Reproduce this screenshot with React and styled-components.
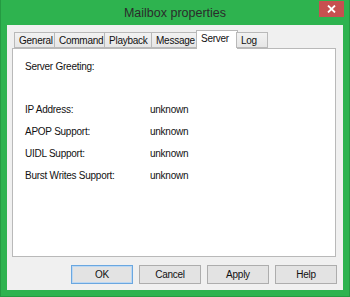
import React from 'react';
import styled, { createGlobalStyle } from 'styled-components';

const Global = createGlobalStyle`
  html, body { margin: 0; padding: 0; }
  body { width: 350px; height: 297px; overflow: hidden; font-family: "Liberation Sans", Arial, sans-serif; }
`;

const Frame = styled.div`
  box-sizing: border-box;
  width: 350px;
  height: 297px;
  background: #2eb34f;
  border: 1px solid #259a42;
  border-top: none;
  display: flex;
  flex-direction: column;
  padding: 0 6px 6px;
`;

const TitleBar = styled.div`
  height: 25px;
  display: grid;
  grid-template-columns: 1fr auto 1fr;
  align-items: start;
  margin: 0 -6px;
`;

const Title = styled.div`
  grid-column: 2;
  font-size: 12.5px;
  color: #2b2b2b;
  padding-top: 6px;
`;

const CloseBtn = styled.div`
  grid-column: 3;
  justify-self: end;
  margin: 1px 5px 0 0;
  width: 25px;
  height: 16px;
  background: #c75050;
  display: flex;
  align-items: center;
  justify-content: center;
`;

const Client = styled.div`
  flex: 1;
  background: #f0f0f0;
  display: flex;
  flex-direction: column;
  padding: 5px 7px 6px 5px;
  font-size: 10px;
  letter-spacing: -0.25px;
  color: #111;
`;

const TabRow = styled.div`
  display: flex;
  align-items: flex-end;
  height: 18px;
  padding-left: 2px;
  position: relative;
  z-index: 1;
`;

const Tab = styled.div`
  box-sizing: border-box;
  width: ${p => p.$w}px;
  height: ${p => (p.$active ? 19 : 16)}px;
  margin: 0 ${p => (p.$active ? -1 : 0)}px ${p => (p.$active ? -1 : 0)}px -1px;
  background: ${p => (p.$active ? '#fff' : 'linear-gradient(#f2f2f2, #e6e6e6)')};
  border: 1px solid #b9b9b9;
  border-bottom: ${p => (p.$active ? 'none' : '1px solid #b9b9b9')};
  display: flex;
  align-items: center;
  padding: 0 4px ${p => (p.$active ? 3 : 0)}px;
  &:first-child { margin-left: 0; }
`;

const Panel = styled.div`
  height: 209px;
  box-sizing: border-box;
  background: #fff;
  border: 1px solid #b9b9b9;
  padding: 11px 12px;
`;

const Greeting = styled.div`
  line-height: 13px;
  margin-bottom: 30px;
`;

const InfoGrid = styled.div`
  display: grid;
  grid-template-columns: 125px auto;
  row-gap: 9px;
  line-height: 13px;
`;

const ButtonRow = styled.div`
  display: flex;
  justify-content: flex-end;
  gap: 6px;
  margin-top: 8px;
  margin-right: -1px;
`;

const Button = styled.div`
  box-sizing: border-box;
  width: 62px;
  height: 19px;
  display: flex;
  align-items: center;
  justify-content: center;
  background: #e3e3e3;
  border: 1px solid ${p => (p.$def ? '#6aa7e0' : '#adadad')};
  box-shadow: ${p => (p.$def ? 'inset 0 0 0 1px #bcd8f3' : 'none')};
`;

const tabs = [
  { label: 'General', w: 41 },
  { label: 'Command', w: 51 },
  { label: 'Playback', w: 48 },
  { label: 'Message', w: 46 },
  { label: 'Server', w: 42, active: true },
  { label: 'Log', w: 32 },
];

const info = [
  ['IP Address:', 'unknown'],
  ['APOP Support:', 'unknown'],
  ['UIDL Support:', 'unknown'],
  ['Burst Writes Support:', 'unknown'],
];

export default function App() {
  return (
    <Frame>
      <Global />
      <TitleBar>
        <Title>Mailbox properties</Title>
        <CloseBtn>
          <svg width="9" height="8" viewBox="0 0 9 8">
            <path d="M1 0.5 L8 7.5 M8 0.5 L1 7.5" stroke="#fff" strokeWidth="1.8" />
          </svg>
        </CloseBtn>
      </TitleBar>
      <Client>
        <TabRow>
          {tabs.map(t => (
            <Tab key={t.label} $w={t.w} $active={t.active}>{t.label}</Tab>
          ))}
        </TabRow>
        <Panel>
          <Greeting>Server Greeting:</Greeting>
          <InfoGrid>
            {info.map(([k, v]) => (
              <React.Fragment key={k}>
                <div>{k}</div>
                <div>{v}</div>
              </React.Fragment>
            ))}
          </InfoGrid>
        </Panel>
        <ButtonRow>
          <Button $def>OK</Button>
          <Button>Cancel</Button>
          <Button>Apply</Button>
          <Button>Help</Button>
        </ButtonRow>
      </Client>
    </Frame>
  );
}
